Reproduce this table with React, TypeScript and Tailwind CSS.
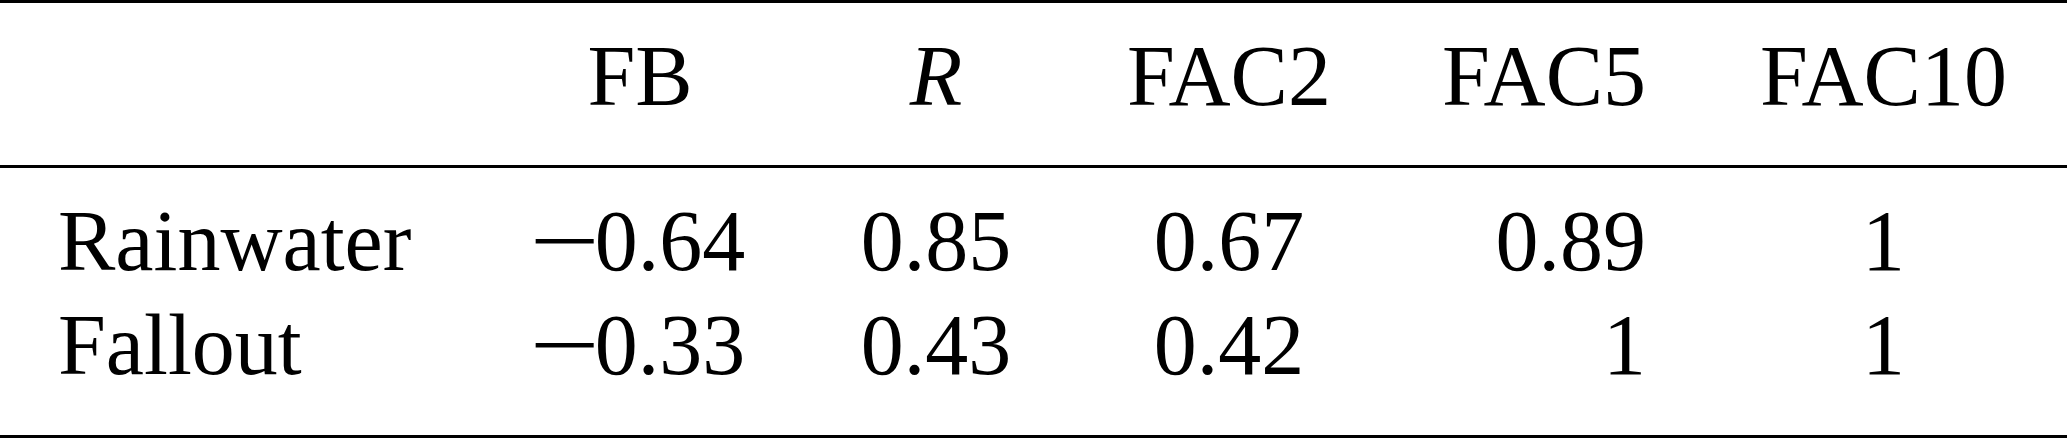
const cols = 'grid grid-cols-[490px_300px_292px_294px_270px_1fr] leading-[104px]';

const rows = [
  { name: 'Rainwater', fb: '0.64', r: '0.85', fac2: '0.67', fac5: '0.89', fac10: '1' },
  { name: 'Fallout', fb: '0.33', r: '0.43', fac2: '0.42', fac5: '1', fac10: '1' },
];

function Neg({ value }: { value: string }) {
  return (
    <span>
      <span className="inline-block w-[60px] text-center scale-x-[1.45]">−</span>
      {value}
    </span>
  );
}

export default function App() {
  return (
    <div className="w-[2067px] h-[439px] bg-white text-black text-[86px] font-['Liberation_Serif',serif] whitespace-nowrap">
      <div className="border-t-[3px] border-b-[3px] border-black">
        {/* header */}
        <div className={`${cols} pt-[21px] pb-[37px] border-b-[3px] border-black`}>
          <div />
          <div className="text-center">FB</div>
          <div className="text-center italic">R</div>
          <div className="text-center">FAC2</div>
          <div className="text-right">FAC5</div>
          <div className="text-center pl-[54px]">FAC10</div>
        </div>

        {/* body */}
        <div className="pt-[21px] pb-[38px]">
          {rows.map((row) => (
            <div key={row.name} className={cols}>
              <div className="pl-[58px]">{row.name}</div>
              <div className="text-center"><Neg value={row.fb} /></div>
              <div className="text-center">{row.r}</div>
              <div className="text-center">{row.fac2}</div>
              <div className="text-right">{row.fac5}</div>
              <div className="text-center pl-[54px]">{row.fac10}</div>
            </div>
          ))}
        </div>
      </div>
    </div>
  );
}
